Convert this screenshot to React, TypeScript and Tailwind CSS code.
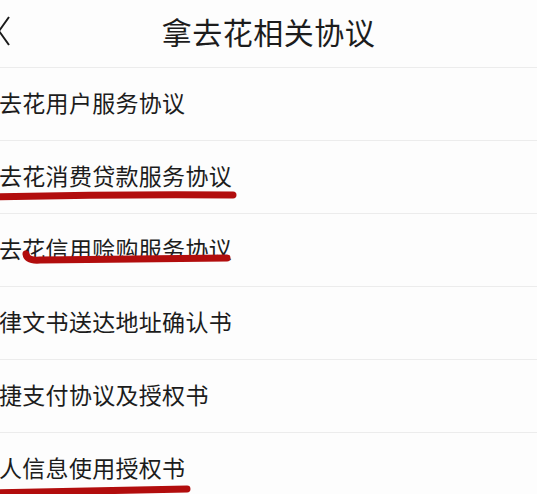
const items = [
  { text: '去花用户服务协议', mark: null },
  { text: '去花消费贷款服务协议', mark: 'M -6 56 Q 120 53 233 54' },
  { text: '去花信用赊购服务协议', mark: 'M 26 40 Q 27 47 40 46 Q 140 45 227 44' },
  { text: '律文书送达地址确认书', mark: null },
  { text: '捷支付协议及授权书', mark: null },
  { text: '人信息使用授权书', mark: 'M -6 60 Q 90 58 187 56' },
];

const App = () => {
  return (
    <div
      className="w-[537px] h-[494px] overflow-hidden bg-[#fdfdfd] text-[#1c1c1c]"
      style={{ fontFamily: '"Noto Sans CJK SC", "Noto Sans", sans-serif' }}
    >
      {/* header */}
      <header className="relative h-[68px] flex items-center justify-center border-b border-[#ececec]">
        <svg className="absolute left-0 top-[15px] overflow-visible" width="12" height="32" viewBox="0 0 12 32">
          <polyline points="9,2 -1,16 9,30" fill="none" stroke="#1a1a1a" strokeWidth="2" />
        </svg>
        <h1 className="text-[30px] leading-none tracking-[0.5px] -mt-[6px]">拿去花相关协议</h1>
      </header>

      {/* agreement list */}
      <ul>
        {items.map((item, i) => (
          <li key={i} className="relative h-[73px] flex items-center border-b border-[#ececec]">
            <span className="text-[23px] leading-none tracking-[0.3px] -ml-[1px] -mt-[4px]">{item.text}</span>
            {item.mark && (
              <svg className="absolute left-0 top-0 overflow-visible" width="260" height="73">
                <path d={item.mark} fill="none" stroke="#b20d0d" strokeWidth="7" strokeLinecap="round" />
              </svg>
            )}
          </li>
        ))}
      </ul>
    </div>
  );
};

export default App;
